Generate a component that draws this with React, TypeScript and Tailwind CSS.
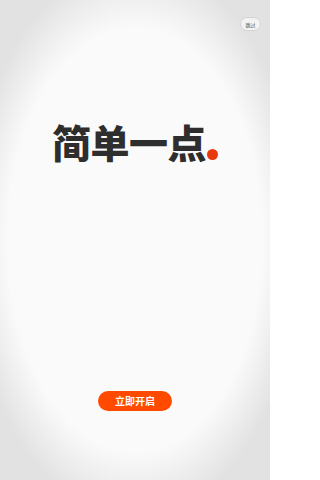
import React from "react";

export default function App() {
  return (
    <div
      className="relative flex h-[480px] w-[270px] flex-col items-center overflow-hidden bg-[radial-gradient(ellipse_62%_58%_at_50%_50%,#fafafa_76%,#e2e2e2_100%)]"
      style={{ fontFamily: '"Noto Sans CJK SC", "Noto Sans", sans-serif' }}
    >
      <button className="absolute right-[9px] top-[17px] flex h-[14px] w-[21px] items-center justify-center rounded-full border border-[#d4d4d4] bg-[#f2f2f2] text-[5px] leading-none text-[#555]">
        跳过
      </button>

      <div className="mt-[116px] flex items-end">
        <span className="text-[39px] font-black leading-[50px] tracking-[-0.5px] text-[#2e2e2e]">
          简单一点
        </span>
        <span className="mb-[6px] ml-[1px] h-[11px] w-[11px] rounded-full bg-[#e83a0d]" />
      </div>

      <button className="mb-[69px] mt-auto flex h-[20px] w-[74px] items-center justify-center rounded-full bg-[#ff4a00] text-[10px] font-bold leading-none text-white">
        立即开启
      </button>
    </div>
  );
}
